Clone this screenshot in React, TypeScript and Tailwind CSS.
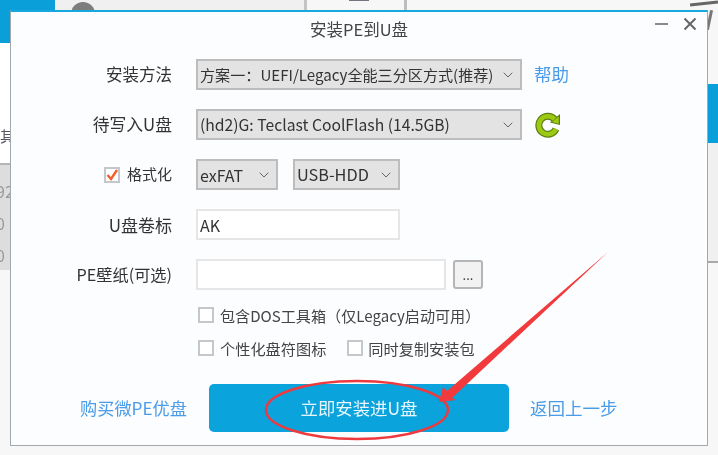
import React from 'react';
import { ChevronDown } from 'lucide-react';

const font = { fontFamily: '"Noto Sans CJK SC", "Noto Sans", sans-serif' };

const Select: React.FC<{ text: string; className: string }> = ({ text, className }) => (
  <div className={`flex h-[31px] items-center justify-between border-2 border-[#bdbdbd] bg-[#e3e3e3] pl-[2px] pr-[4px] text-[#333] ${className}`}>
    <span className="whitespace-nowrap">{text}</span>
    <ChevronDown size={16} strokeWidth={1.5} className="shrink-0 text-[#666]" />
  </div>
);

const Label: React.FC<{ children: React.ReactNode; className?: string }> = ({ children, className = 'text-[16.5px]' }) => (
  <div className={`flex w-[161px] shrink-0 items-center justify-end text-[#333] ${className}`}>{children}</div>
);

const Check: React.FC<{ checked?: boolean }> = ({ checked }) => (
  <span className="relative inline-block h-[16px] w-[16px] shrink-0 border-2 border-[#c4c8cc] bg-white">
    {checked && (
      <svg viewBox="0 0 16 16" className="absolute left-[-2px] top-[-2px] h-[16px] w-[16px]">
        <path d="M3.5 8 L7 12 L13 3" fill="none" stroke="#f0602c" strokeWidth="2.4" />
      </svg>
    )}
  </span>
);

const Refresh: React.FC = () => (
  <svg viewBox="0 0 26 26" className="ml-[13px] h-[26px] w-[26px]">
    <path d="M19.5 7.2 A9 9 0 1 0 21 17" fill="none" stroke="#5f7d16" strokeWidth="7" />
    <path d="M15 10.5 L25 2 L25 13 Z" fill="#5f7d16" />
    <path d="M19.5 7.2 A9 9 0 1 0 21 17" fill="none" stroke="#9cca12" strokeWidth="4.6" />
    <path d="M17 10 L23.8 4.4 L23.8 11.8 Z" fill="#9cca12" />
  </svg>
);

export default function App() {
  return (
    <div className="relative h-[455px] w-[718px] overflow-hidden bg-[#f7f7f7] pl-[10px] pt-[10px] blur-[0.35px]" style={font}>
      {/* app behind the dialog */}
      <div className="absolute left-0 top-0 h-[43px] w-[55px] bg-[#0a9fd8]" />
      <div className="absolute left-[55px] top-0 h-[10px] w-[250px] bg-[#f0f0f0]" />
      <div className="absolute left-[71px] top-[2px] h-[24px] w-[24px] rounded-full bg-[#7d7d7d]" />
      <div className="absolute left-[304px] top-0 h-[10px] w-[3px] bg-[#c4c4c4]" />
      <div className="absolute left-[404px] top-0 h-[10px] w-[3px] bg-[#bdbdbd]" />
      <div className="absolute left-[349px] top-0 h-[1px] w-[20px] bg-[#77727f]" />
      <div className="absolute left-0 top-[43px] h-[122px] w-[10px] bg-white" />
      <div className="absolute left-0 top-[128px] text-[15px] leading-[16px] text-[#556]">其</div>
      <div className="absolute left-0 top-[163px] h-[2px] w-[10px] bg-[#b5b5b5]" />
      <div className="absolute left-0 top-[165px] flex h-[105px] w-[10px] flex-col overflow-hidden bg-[#dddddd] text-[16px] leading-[32px] text-[#999]">
        <span className="ml-[-4px] mt-[10px]">92</span>
        <span className="ml-[-4px]">0</span>
        <span className="ml-[-4px]">0</span>
      </div>
      <div className="absolute left-[708px] top-[84px] h-[59px] w-[10px] bg-[#0a9fd8]" />
      <div className="absolute left-[708px] top-[143px] h-[119px] w-[10px] bg-[#f0f0f0]" />
      <div className="absolute left-[708px] top-[261px] h-[2px] w-[10px] bg-[#a9a9a9]" />
      <div className="absolute left-[690px] top-[2px] h-[3px] w-[28px] -rotate-6 bg-[#666]" />
      <div className="absolute left-[708px] top-[10px] h-[20px] w-[3px] rotate-12 bg-[#777]" />

      {/* dialog */}
      <div className="relative flex h-[436px] w-[698px] flex-col border border-t-2 border-[#a3a8ad] border-t-[#17a8df] bg-[#fbfdfe]">
        <div className="relative flex h-[35px] shrink-0 items-center justify-center text-[16.5px] text-[#444]">
          安装PE到U盘
          <div className="absolute right-[10px] top-[5px] flex items-center gap-[15px]">
            <div className="h-[2px] w-[13px] bg-[#8a8a8a]" />
            <svg viewBox="0 0 14 14" className="h-[14px] w-[14px]">
              <path d="M1.5 1.5 L12.5 12.5 M12.5 1.5 L1.5 12.5" stroke="#666" strokeWidth="2" />
            </svg>
          </div>
        </div>

        <div className="flex flex-col pt-[12px]">
          <div className="flex h-[31px] items-center">
            <Label>安装方法</Label>
            <div className="ml-[24px]"><Select text="方案一：UEFI/Legacy全能三分区方式(推荐)" className="w-[326px] text-[15.1px]" /></div>
            <span className="ml-[12px] text-[17.5px] text-[#4a9be8]">帮助</span>
          </div>
          <div className="mt-[19px] flex h-[31px] items-center">
            <Label className="text-[16.8px]">待写入U盘</Label>
            <div className="ml-[24px]"><Select text="(hd2)G: Teclast CoolFlash (14.5GB)" className="w-[326px] text-[15.7px]" /></div>
            <Refresh />
          </div>
          <div className="mt-[19px] flex h-[31px] items-center">
            <Label className="text-[15px]">
              <Check checked />
              <span className="ml-[7px]">格式化</span>
            </Label>
            <div className="ml-[24px]"><Select text="exFAT" className="w-[82px] text-[16px]" /></div>
            <div className="ml-[15px]"><Select text="USB-HDD" className="w-[107px] text-[16.3px]" /></div>
          </div>
          <div className="mt-[19px] flex h-[31px] items-center">
            <Label className="text-[17px]">U盘卷标</Label>
            <div className="ml-[24px] flex h-[31px] w-[204px] items-center border-2 border-[#e6e6e6] bg-white pl-[2px] text-[16px] text-[#333]">AK</div>
          </div>
          <div className="mt-[19px] flex h-[31px] items-center">
            <Label className="text-[16.2px]">PE壁纸(可选)</Label>
            <div className="ml-[24px] h-[31px] w-[250px] border-2 border-[#e6e6e6] bg-white" />
            <div className="ml-[7px] flex h-[29px] w-[30px] items-center justify-center rounded-[3px] border-2 border-[#b5b5b5] bg-[#f2f2f2] text-[13px] text-[#333]">...</div>
          </div>
          <div className="ml-[187px] mt-[17px] flex h-[16px] items-center gap-[6px] text-[15.1px] text-[#444]">
            <Check />
            <span>包含DOS工具箱（仅Legacy启动可用）</span>
          </div>
          <div className="ml-[187px] mt-[17px] flex h-[16px] items-center text-[15.2px] text-[#444]">
            <Check />
            <span className="ml-[6px]">个性化盘符图标</span>
            <span className="ml-[21px] flex"><Check /></span>
            <span className="ml-[5px]">同时复制安装包</span>
          </div>
        </div>

        <div className="mt-[28px] flex h-[48px] items-center">
          <span className="ml-[69px] w-[129px] text-[17.2px] text-[#4a9be8]">购买微PE优盘</span>
          <div className="flex h-[48px] w-[300px] items-center justify-center rounded-[5px] bg-[#0aa3dc] text-[17.4px] text-[#e8f6fc]">立即安装进U盘</div>
          <span className="ml-[21px] text-[17.5px] text-[#4a9be8]">返回上一步</span>
        </div>
      </div>

      {/* red annotation */}
      <svg viewBox="0 0 718 455" className="pointer-events-none absolute left-0 top-0 h-[455px] w-[718px]">
        <ellipse cx="357" cy="410" rx="91" ry="29" fill="none" stroke="#ee3a3f" strokeWidth="2.4" />
        <path d="M608 252 L452 398 L456 400 L439 402 L443 387 L447 391 Z" fill="#f23a3c" />
      </svg>
    </div>
  );
}
